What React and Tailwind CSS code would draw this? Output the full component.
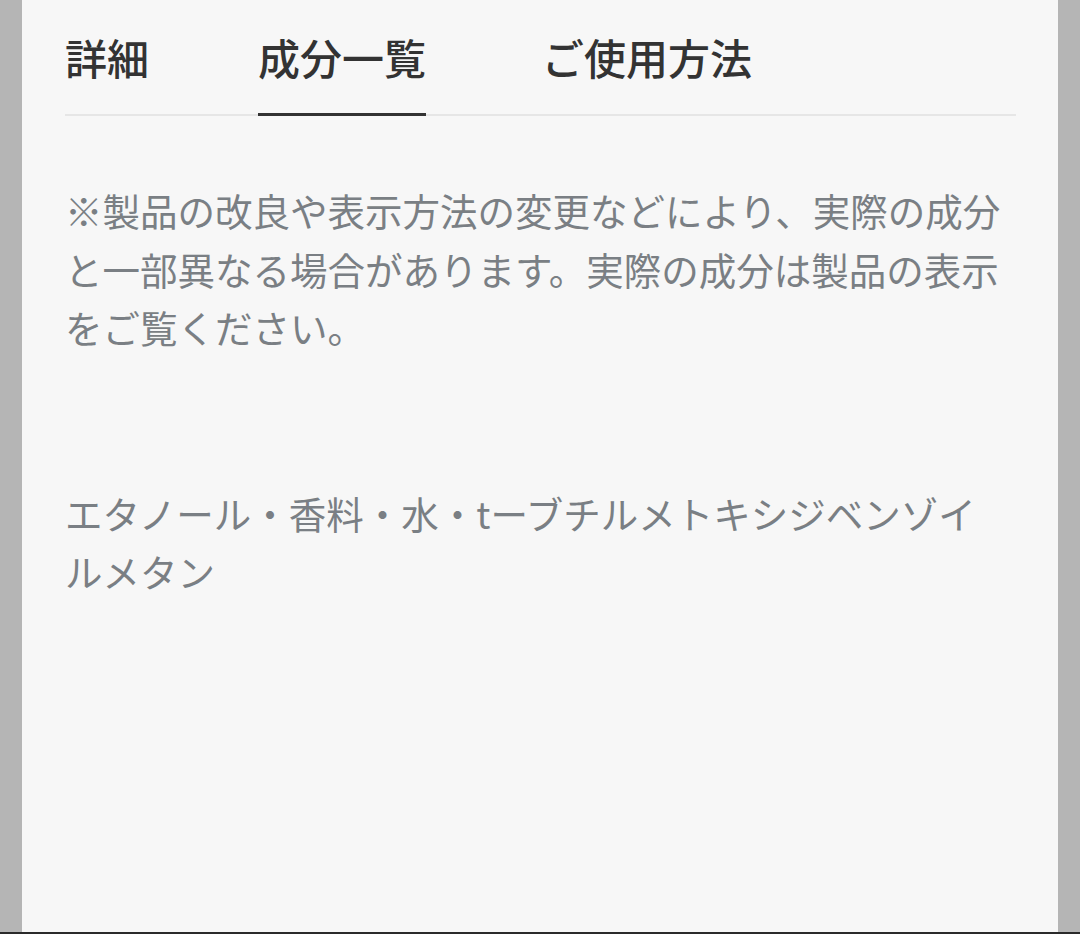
const TABS = [
  { label: '詳細', ml: 'ml-0' },
  { label: '成分一覧', ml: 'ml-[109px]', active: true },
  { label: 'ご使用方法', ml: 'ml-[116px]' },
]

const FONT = "font-['Noto_Sans_CJK_JP','Noto_Sans',sans-serif]"

export default function App() {
  return (
    <div className={`w-[1080px] h-[934px] bg-[#b5b5b5] flex border-b-2 border-[#2a2a2a] ${FONT}`}>
      {/* panel */}
      <div className="ml-[22px] w-[1036px] h-full bg-[#f7f7f7] pl-[43px] pr-[42px]">
        {/* tabs */}
        <div className="flex h-[116px] border-b-2 border-[#e6e6e6]">
          {TABS.map(t => (
            <div
              key={t.label}
              className={`relative h-full flex items-center text-[42px] font-medium text-[#333333] leading-none ${t.ml}`}
            >
              {t.label}
              {t.active && (
                <span className="absolute left-0 right-0 -bottom-[2px] h-[3px] bg-[#333333]" />
              )}
            </div>
          ))}
        </div>

        {/* body */}
        <div className="w-[945px] text-[37.5px] leading-[58.5px] text-[#7a7f84]">
          <p className="mt-[65px]">
            ※製品の改良や表示方法の変更などにより、実際の成分と一部異なる場合があります。実際の成分は製品の表示をご覧ください。
          </p>
          <p className="mt-[127px]">
            エタノール・香料・水・tーブチルメトキシジベンゾイルメタン
          </p>
        </div>
      </div>
    </div>
  )
}
